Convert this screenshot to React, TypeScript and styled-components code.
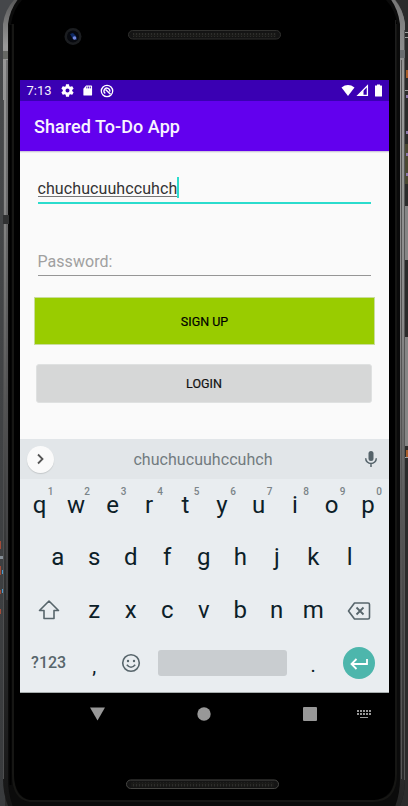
import React from "react";
import styled, { createGlobalStyle } from "styled-components";

const GlobalStyle = createGlobalStyle`
  html, body { margin: 0; padding: 0; background: #2b2b2b; overflow: hidden; }
  * { box-sizing: border-box; }
  body { font-family: Roboto, "Liberation Sans", sans-serif; }
`;

const Stage = styled.main`
  position: relative;
  width: 408px;
  height: 806px;
  overflow: hidden;
`;

const FrameArt = styled.svg`
  position: absolute;
  inset: 0;
`;

const Device = styled.div`
  position: relative;
  display: flex;
  flex-direction: column;
  margin: 0 19px 0 20px;
  height: 806px;
`;

const TopBezel = styled.div`
  height: 80px;
  flex: none;
`;

const StatusBar = styled.div`
  display: flex;
  align-items: center;
  justify-content: space-between;
  height: 21px;
  padding: 0 4px 0 6.5px;
  background: #3a00b3;
  color: #f4f0fc;
`;

const StatusGroup = styled.div<{ $gap: number }>`
  display: flex;
  align-items: center;
  gap: ${(p) => p.$gap}px;
`;

const Clock = styled.span`
  width: 26px;
  font-size: 13px;
  line-height: 22px;
  padding-top: 1px;
`;

const AppBar = styled.header`
  display: flex;
  align-items: center;
  height: 50px;
  padding: 2px 14px 0;
  background: #6200ee;
  color: #f8f4ff;
`;

const Title = styled.h1`
  margin: 0;
  font-size: 18px;
  font-weight: 500;
  line-height: 24px;
  letter-spacing: 0.05px;
  white-space: nowrap;
`;

const Form = styled.section`
  display: flex;
  flex-direction: column;
  height: 288px;
  padding: 22px 14px 0;
  background: #fafafa;
  border-top: 1px solid #cfc8dd;
  box-shadow: inset 0 1px 0 #ebebed;
`;

const Field = styled.div<{ $active?: boolean }>`
  display: flex;
  align-items: center;
  height: ${(p) => (p.$active ? 30 : 29)}px;
  margin: 0 4px 0 3.5px;
  padding-top: ${(p) => (p.$active ? 0 : 1)}px;
  border-bottom: ${(p) => (p.$active ? "2px solid #2bdccd" : "1px solid #969696")};
  font-size: 16px;
  line-height: 20px;
  letter-spacing: ${(p) => (p.$active ? 0.09 : 0.05)}px;
  color: ${(p) => (p.$active ? "#333" : "#a0a0a0")};
`;

const PasswordSlot = styled.div`
  padding-top: 43px;
`;

const Typed = styled.span`
  height: 18px;
  line-height: 19px;
  border-bottom: 1px solid #777;
`;

const Caret = styled.span`
  width: 2px;
  height: 21px;
  margin-top: -1px;
  background: #2bdccd;
`;

const Button = styled.button<{ $primary?: boolean }>`
  display: flex;
  align-items: center;
  justify-content: center;
  flex: none;
  height: ${(p) => (p.$primary ? 48 : 39)}px;
  margin: ${(p) => (p.$primary ? "21px 0 0" : "19px 3px 0 2px")};
  padding: ${(p) => (p.$primary ? "1px 0 0" : "0")};
  border: 1px solid ${(p) => (p.$primary ? "#c9dd9c" : "#dfe1e1")};
  border-radius: ${(p) => (p.$primary ? 0 : 3)}px;
  background: ${(p) => (p.$primary ? "#99cc00" : "#d6d7d7")};
  color: ${(p) => (p.$primary ? "#000" : "#111")};
  font: 400 12.5px/16px Roboto, sans-serif;
  -webkit-text-stroke: 0.2px currentColor;
`;

const Suggestions = styled.div`
  display: flex;
  align-items: center;
  justify-content: space-between;
  height: 40px;
  padding: 0 10px 0 7px;
  background: #e2e6e9;
  color: #727b7f;
  font-size: 16px;
  letter-spacing: 0.05px;
`;

const Suggestion = styled.span`
  margin-right: 11px;
  padding-top: 1px;
`;

const Expand = styled.div`
  display: grid;
  place-items: center;
  width: 27px;
  height: 27px;
  border-radius: 50%;
  background: #fafafa;
  box-shadow: 0 1px 1px #c4c8ca;
`;

const Keyboard = styled.div`
  display: flex;
  flex-direction: column;
  height: 214px;
  padding: 0 2.5px 0 1px;
  background: #e9edf0;
  border-bottom: 1px solid #a7adad;
  color: #0c2028;
`;

const KeyRow = styled.div<{ $height: number }>`
  display: flex;
  justify-content: center;
  height: ${(p) => p.$height}px;
`;

const Key = styled.div<{ $units?: number; $size?: number; $drop?: number; $muted?: boolean }>`
  position: relative;
  display: flex;
  align-items: center;
  justify-content: center;
  width: ${(p) => (p.$units ?? 1) * 36.5}px;
  padding-top: ${(p) => p.$drop ?? 0}px;
  font-size: ${(p) => p.$size ?? 24}px;
  font-weight: ${(p) => (p.$muted ? 500 : 400)};
  line-height: 28px;
  color: ${(p) => (p.$muted ? "#57656b" : "inherit")};
`;

const Hint = styled.span`
  position: absolute;
  top: 7px;
  left: 26.5px;
  font-size: 10px;
  font-weight: 500;
  line-height: 12px;
  color: #7b8488;
`;

const SpaceBar = styled.div`
  width: 129px;
  height: 26px;
  border-radius: 3px;
  background: #c9cdd0;
`;

const Enter = styled.div`
  display: grid;
  place-items: center;
  width: 32px;
  height: 32px;
  border-radius: 50%;
  background: #4db6ac;
`;

const NavBar = styled.nav`
  display: flex;
  align-items: center;
  height: 42px;
  padding-left: 70px;
`;

const NavItem = styled.div<{ $after: number }>`
  display: flex;
  margin-right: ${(p) => p.$after}px;
`;

const numbers = "1234567890";

function Speaker({ x, y, edge }: { x: number; y: number; edge: string }) {
  return (
    <g>
      <rect x={x + 0.5} y={y + 0.5} width="152" height="8.5" rx="4.2" fill="#141414" stroke={edge} />
      <rect x={x + 5} y={y + 3} width="143" height="4" fill="url(#mesh)" />
    </g>
  );
}

function Frame() {
  return (
    <FrameArt width="408" height="806" viewBox="0 0 408 806">
      <defs>
        <linearGradient id="desk" x2="0" y2="1">
          <stop offset="0" stopColor="#484a4c" />
          <stop offset="1" stopColor="#393b3d" />
        </linearGradient>
        <linearGradient id="railL" x2="0" y2="1">
          <stop offset="0" stopColor="#555" />
          <stop offset="0.06" stopColor="#999" />
          <stop offset="0.25" stopColor="#888" />
          <stop offset="0.5" stopColor="#555" />
          <stop offset="0.7" stopColor="#303132" />
          <stop offset="1" stopColor="#151515" />
        </linearGradient>
        <linearGradient id="railR" x2="0" y2="1">
          <stop offset="0" stopColor="#777" />
          <stop offset="0.1" stopColor="#999" />
          <stop offset="0.4" stopColor="#888" />
          <stop offset="0.65" stopColor="#555" />
          <stop offset="1" stopColor="#242424" />
        </linearGradient>
        <pattern id="mesh" width="3" height="4" patternUnits="userSpaceOnUse">
          <rect width="3" height="4" fill="#1a1a18" />
          <rect width="1" height="3" x="1" fill="#2d2d2b" />
        </pattern>
      </defs>
      <rect width="5" height="806" fill="url(#desk)" />
      <rect width="20" height="30" fill="#45474a" />
      <rect x="388" width="20" height="806" fill="#2b2b2b" />
      <path d="M405 144h3v40h-3z" fill="#4b4933" />
      <path d="M405 206h3v54h-3zM405 337h3v109h-3z" fill="#858585" />
      <path d="M405 32h3v1h-3zM405 37h3v1h-3zM405 90h3v1h-3zM405 457h3v1h-3z" fill="#a0a0a0" />
      <path d="M406 70h2v8h-2zM406 450h2v7h-2z" fill="#a65c2b" />
      <path d="M406 131h2v3h-2zM406 153h2v3h-2zM406 173h2v3h-2zM406 95h2v3h-2z" fill="#8b79aa" />
      <path d="M0 541h1v8H0zM0 566h1v9H0zM0 590h1v4H0zM0 609h1v5H0z" fill="#a34b38" />
      <path d="M0 556h3v3H0z" fill="#858e96" />
      <path d="M2 570h1v4H2zM2 589h1v4H2z" fill="#4b9bd0" />
      <path d="M3 24Q5 8 17-3H393Q403 8 405 24V779Q405 798 397 812H11Q3 798 3 779Z" fill="url(#railL)" />
      <path d="M204-3H392Q403 8 405 24V779Q405 798 397 812H204Z" fill="url(#railR)" />
      <path d="M8 24Q10 8 20-3H389Q398 8 400 24V779Q400 796 393 812H15Q8 796 8 779Z" fill="#0b0b0b" />
      <path d="M3.5 100V779M7 60V600" stroke="#4e4f50" fill="none" />
      <path d="M404.5 30V780M401.5 60V779" stroke="#555" fill="none" />
      <path d="M10.5 25V785" stroke="#000" strokeWidth="2" />
      <path d="M13 24V774Q13 799 30 801H373Q396 801 396 774V20" fill="none" stroke="#161614" strokeWidth="2" />
      <path d="M11 24Q13 10 22 0H386Q396 11 397 24H395V775Q394 798 374 800H30Q15 797 14 775V24Z" fill="#000" />
      <rect x="3" y="51" width="5" height="8" fill="#666864" />
      <rect x="400" y="50" width="5" height="8" fill="#6a6d70" />
      <path d="M3 215h6v9H3z" fill="#303132" />
      <path d="M395.500 20V180" stroke="#1d1d1d" />
      <circle cx="73" cy="36.500" r="8.500" fill="#1b1d20" />
      <circle cx="73" cy="36.500" r="6" fill="#07090f" />
      <path d="M70 34l3-1 3 3 1 4-4-1z" fill="#102b66" />
      <circle cx="74.500" cy="38" r="1.800" fill="#7387dc" />
      <Speaker x={128} y={30} edge="#30302e" />
      <Speaker x={126} y={779.5} edge="#474744" />
    </FrameArt>
  );
}

export default function App() {
  return (
    <>
      <GlobalStyle />
      <Stage>
        <Frame />
        <Device>
          <TopBezel />
          <StatusBar>
            <StatusGroup $gap={7}>
              <Clock>7:13</Clock>
              <svg width="15" height="15" viewBox="0 0 24 24" fill="#fff">
                <path d="M19.430 12.980c.04-.32.07-.64.07-.98s-.03-.66-.07-.98l2.110-1.650c.19-.15.24-.42.12-.64l-2-3.460c-.12-.22-.39-.3-.61-.22l-2.490 1c-.52-.4-1.080-.73-1.690-.98l-.38-2.650C14.460 2.180 14.250 2 14 2h-4c-.25 0-.46.18-.49.42l-.38 2.650c-.61.25-1.170.59-1.690.98l-2.490-1c-.23-.09-.49 0-.61.22l-2 3.460c-.13.22-.07.49.12.64l2.110 1.650c-.04.32-.07.65-.07.98s.03.66.07.98l-2.110 1.650c-.19.15-.24.42-.12.64l2 3.460c.12.22.39.3.61.22l2.490-1c.52.4 1.080.73 1.690.98l.38 2.650c.03.24.24.42.49.42h4c.25 0 .46-.18.49-.42l.38-2.650c.61-.25 1.170-.59 1.690-.98l2.490 1c.23.09.49 0 .61-.22l2-3.460c.12-.22.07-.49-.12-.64zM12 15.200A3.200 3.200 0 1 1 12 8.800a3.200 3.200 0 0 1 0 6.400z" />
              </svg>
              <svg width="11" height="13" viewBox="0 0 12 13">
                <path d="M4.500 1H10q1 0 1 1v9q0 1-1 1H2.500q-1 0-1-1V4.500Z" fill="#fff" />
                <path d="M5.300 2.200v2M7.200 2.200v2M9.100 2.200v2" stroke="#3a00b3" />
              </svg>
              <svg width="14" height="14" viewBox="0 0 14 14" fill="none" stroke="#fff">
                <circle cx="7" cy="7" r="5.700" strokeWidth="1.300" />
                <path d="M5.300 9.400A2.900 2.900 0 1 1 9.700 7.800" strokeWidth="1.300" />
                <path d="M5.500 5.500 10.500 10.300" strokeWidth="1.500" />
              </svg>
            </StatusGroup>
            <StatusGroup $gap={1}>
              <svg width="14" height="13" viewBox="0 0 14 13">
                <path d="M.5 3.400Q7-1.300 13.500 3.400L7 12Z" fill="#fff" />
              </svg>
              <svg width="13" height="13" viewBox="0 0 13 13">
                <path d="M11.400 1.800V11.400H2Z" fill="none" stroke="#fff" strokeWidth="1.300" />
                <path d="M7.500 6V12H1.500Z" fill="#fff" />
              </svg>
              <svg width="15" height="13" viewBox="0 0 15 13">
                <path d="M5 1.500h2V.5h3v1h1.500q.5 0 .5.500v10q0 .5-.5.500h-6q-.5 0-.5-.5V2Z" fill="#fff" />
              </svg>
            </StatusGroup>
          </StatusBar>
          <AppBar>
            <Title>Shared To-Do App</Title>
          </AppBar>
          <Form>
            <Field $active>
              <Typed>chuchucuuhccuhch</Typed>
              <Caret />
            </Field>
            <PasswordSlot>
              <Field>Password:</Field>
            </PasswordSlot>
            <Button $primary>SIGN UP</Button>
            <Button>LOGIN</Button>
          </Form>
          <Suggestions>
            <Expand>
              <svg width="9" height="12" viewBox="0 0 9 12" fill="none" stroke="#555" strokeWidth="1.800">
                <path d="M2 1.500 6.500 6 2 10.500" />
              </svg>
            </Expand>
            <Suggestion>chuchucuuhccuhch</Suggestion>
            <svg width="16" height="18" viewBox="0 0 16 18" fill="none" stroke="#55636a">
              <rect x="5.500" y="1" width="5" height="10" rx="2.500" fill="#55636a" stroke="none" />
              <path d="M2.700 8.300a5.300 5.300 0 0 0 10.600 0M8 13.500V17" strokeWidth="1.500" />
            </svg>
          </Suggestions>
          <Keyboard>
            <KeyRow $height={51}>
              {[..."qwertyuiop"].map((c, i) => (
                <Key key={c}>
                  {c}
                  <Hint>{numbers[i]}</Hint>
                </Key>
              ))}
            </KeyRow>
            <KeyRow $height={53}>
              {[..."asdfghjkl"].map((c) => (
                <Key key={c}>{c}</Key>
              ))}
            </KeyRow>
            <KeyRow $height={53}>
              <Key $units={1.5}>
                <svg width="24" height="22" viewBox="0 0 24 22" fill="none" stroke="#57656b" strokeWidth="1.600">
                  <path d="M12 2 21.500 11.500H17V19.500H7V11.500H2.500Z" strokeLinejoin="round" />
                </svg>
              </Key>
              {[..."zxcvbnm"].map((c) => (
                <Key key={c}>{c}</Key>
              ))}
              <Key $units={1.5} $drop={2}>
                <svg width="24" height="20" viewBox="0 0 24 20" fill="none" stroke="#57656b" strokeWidth="1.600">
                  <path d="M7.500 2H21q1.500 0 1.500 1.500v13Q22.500 18 21 18H7.500L1.500 10Z" strokeLinejoin="round" />
                  <path d="M9.500 6.500l7 7M16.500 6.500l-7 7" strokeWidth="1.800" />
                </svg>
              </Key>
            </KeyRow>
            <KeyRow $height={54}>
              <Key $units={1.5} $size={16} $muted>?123</Key>
              <Key $size={20} $drop={5}>,</Key>
              <Key>
                <svg width="20" height="20" viewBox="0 0 20 20" fill="none" stroke="#57656b" strokeWidth="1.600">
                  <circle cx="10" cy="10" r="8.300" />
                  <path d="M5.800 11.800Q10 16.700 14.200 11.800" />
                  <circle cx="7" cy="8" r="1.200" fill="#57656b" stroke="none" />
                  <circle cx="13" cy="8" r="1.200" fill="#57656b" stroke="none" />
                </svg>
              </Key>
              <Key $units={4}>
                <SpaceBar />
              </Key>
              <Key $size={20} $drop={4}>.</Key>
              <Key $units={1.5}>
                <Enter>
                  <svg width="20" height="14" viewBox="0 0 20 14" fill="none" stroke="#fff" strokeWidth="1.800">
                    <path d="M18 3V8H3M7.500 3 2.500 8l5 5" />
                  </svg>
                </Enter>
              </Key>
            </KeyRow>
          </Keyboard>
          <NavBar>
            <NavItem $after={92}>
              <svg width="15" height="14" viewBox="0 0 15 14">
                <path d="M0 .5H15L7.500 13.500Z" fill="#989898" />
              </svg>
            </NavItem>
            <NavItem $after={92}>
              <svg width="14" height="14" viewBox="0 0 14 14">
                <circle cx="7" cy="7" r="6.700" fill="#989898" />
              </svg>
            </NavItem>
            <NavItem $after={40}>
              <svg width="14" height="14" viewBox="0 0 14 14">
                <rect width="14" height="14" rx="1" fill="#989898" />
              </svg>
            </NavItem>
            <NavItem $after={0}>
              <svg width="14" height="8" viewBox="0 0 14 8" stroke="#989898" fill="none">
                <path d="M0 1H14M0 4H14" strokeWidth="2" strokeDasharray="2 1" />
                <path d="M3 7.500H11" />
              </svg>
            </NavItem>
          </NavBar>
        </Device>
      </Stage>
    </>
  );
}
